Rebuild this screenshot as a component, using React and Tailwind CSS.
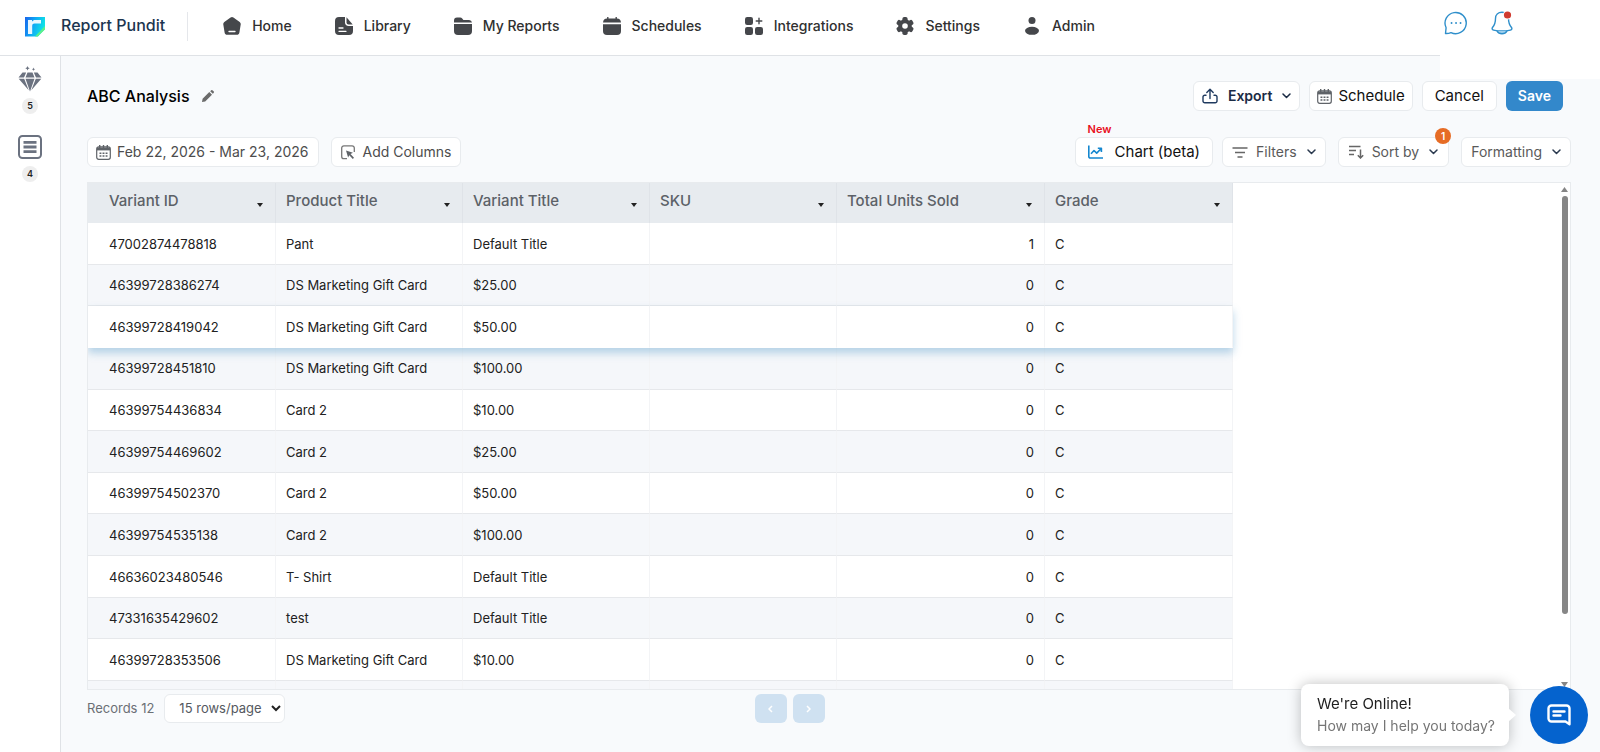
import { useState } from "react";
import clsx from "clsx";

const navItems = [
  { label: "Home", icon: HomeIcon },
  { label: "Library", icon: LibraryIcon },
  { label: "My Reports", icon: FolderIcon },
  { label: "Schedules", icon: CalendarSolidIcon },
  { label: "Integrations", icon: GridPlusIcon },
  { label: "Settings", icon: GearIcon },
  { label: "Admin", icon: UserIcon },
];

const columns = [
  { key: "id", label: "Variant ID", width: "w-[188px]" },
  { key: "product", label: "Product Title", width: "w-[187px]" },
  { key: "variant", label: "Variant Title", width: "w-[187px]" },
  { key: "sku", label: "SKU", width: "w-[187px]" },
  { key: "units", label: "Total Units Sold", width: "w-[208px]" },
  { key: "grade", label: "Grade", width: "w-[188px]" },
];

const rows = [
  { id: "47002874478818", product: "Pant", variant: "Default Title", sku: "", units: 1, grade: "C" },
  { id: "46399728386274", product: "DS Marketing Gift Card", variant: "$25.00", sku: "", units: 0, grade: "C" },
  { id: "46399728419042", product: "DS Marketing Gift Card", variant: "$50.00", sku: "", units: 0, grade: "C" },
  { id: "46399728451810", product: "DS Marketing Gift Card", variant: "$100.00", sku: "", units: 0, grade: "C" },
  { id: "46399754436834", product: "Card 2", variant: "$10.00", sku: "", units: 0, grade: "C" },
  { id: "46399754469602", product: "Card 2", variant: "$25.00", sku: "", units: 0, grade: "C" },
  { id: "46399754502370", product: "Card 2", variant: "$50.00", sku: "", units: 0, grade: "C" },
  { id: "46399754535138", product: "Card 2", variant: "$100.00", sku: "", units: 0, grade: "C" },
  { id: "46636023480546", product: "T- Shirt", variant: "Default Title", sku: "", units: 0, grade: "C" },
  { id: "47331635429602", product: "test", variant: "Default Title", sku: "", units: 0, grade: "C" },
  { id: "46399728353506", product: "DS Marketing Gift Card", variant: "$10.00", sku: "", units: 0, grade: "C" },
];

function LogoIcon() {
  return (
    <svg width="20" height="20" viewBox="0 0 20 20" aria-hidden="true">
      <defs>
        <linearGradient id="logo-fill" x1="0" y1="0" x2="1" y2="0.3">
          <stop offset="0" stopColor="#1a63ea" />
          <stop offset="0.5" stopColor="#0fa8f5" />
          <stop offset="1" stopColor="#0fe3e6" />
        </linearGradient>
      </defs>
      <path d="M0 0h20v12l-7 7.500H0z" fill="url(#logo-fill)" />
      <path d="M20 9v3.500L12.500 19.500 10 19.500z" fill="#5df08a" />
      <path d="M3 3h4v1.500L9 3h7v3.500H9.500C8 6.500 7.200 7.300 7.200 9v8H3z" fill="#e9f7ff" />
    </svg>
  );
}

function HomeIcon() {
  return (
    <svg width="18" height="18" viewBox="0 0 18 18" fill="#45474b" aria-hidden="true">
      <path d="M7.600.600a2.400 2.400 0 0 1 2.800 0l6.300 4.300c.8.600 1.200 1.500 1 2.500l-1.300 8c-.2 1.500-1.300 2.400-2.700 2.400H4.300c-1.400 0-2.500-.9-2.700-2.400l-1.300-8c-.2-1 .2-1.900 1-2.500z" />
      <path d="M6 14.500h6" stroke="#fff" strokeWidth="1.300" strokeLinecap="round" />
    </svg>
  );
}

function LibraryIcon() {
  return (
    <svg width="18" height="18" viewBox="0 0 18 18" fill="#45474b" aria-hidden="true">
      <path d="M4 0h6v5.500C10 7.500 11.500 9 13.500 9H18v5a4 4 0 0 1-4 4H4a4 4 0 0 1-4-4V4a4 4 0 0 1 4-4z" />
      <path d="M11.500.300 17.700 7.500H13.500a2 2 0 0 1-2-2z" />
      <path d="M4 11h4M4 14.300h7" stroke="#fff" strokeWidth="1.300" strokeLinecap="round" />
    </svg>
  );
}

function FolderIcon() {
  return (
    <svg width="18" height="18" viewBox="0 0 18 18" fill="#45474b" aria-hidden="true">
      <path d="M0 5.500V3.500A3 3 0 0 1 3 .500h3.200c.8 0 1.500.3 2 1L9.400 3H15a3 3 0 0 1 3 2.500z" />
      <path d="M0 7h18v7a4 4 0 0 1-4 4H4a4 4 0 0 1-4-4z" />
    </svg>
  );
}

function CalendarSolidIcon() {
  return (
    <svg width="18" height="18" viewBox="0 0 18 18" fill="#45474b" aria-hidden="true">
      <path d="M0 5.600C.200 3 1.600 1.500 4 1.500h10c2.400 0 3.800 1.500 4 4.100z" />
      <path d="M0 7.200h18V14a4 4 0 0 1-4 4H4a4 4 0 0 1-4-4z" />
      <path d="M4.800.500v2M13.200.500v2" stroke="#45474b" strokeWidth="1.400" strokeLinecap="round" />
    </svg>
  );
}

function GridPlusIcon() {
  return (
    <svg width="18" height="18" viewBox="0 0 18 18" fill="#45474b" aria-hidden="true">
      <rect width="8" height="8" rx="2.200" />
      <rect y="10" width="8" height="8" rx="2.200" />
      <rect x="10" y="10" width="8" height="8" rx="2.200" />
      <path d="M14 1.200v5.600M11.200 4h5.600" stroke="#45474b" strokeWidth="1.400" strokeLinecap="round" />
    </svg>
  );
}

function GearIcon() {
  return (
    <svg width="18" height="18" viewBox="0 0 18 18" aria-hidden="true">
      <g fill="#45474b">
        <circle cx="9" cy="9" r="6.800" />
        <rect x="6.400" y="0" width="5.200" height="18" rx="1.800" />
        <rect x="6.400" y="0" width="5.200" height="18" rx="1.800" transform="rotate(60 9 9)" />
        <rect x="6.400" y="0" width="5.200" height="18" rx="1.800" transform="rotate(120 9 9)" />
      </g>
      <circle cx="9" cy="9" r="2.800" fill="#fff" />
    </svg>
  );
}

function UserIcon() {
  return (
    <svg width="18" height="18" viewBox="0 0 18 18" fill="#45474b" aria-hidden="true">
      <circle cx="9" cy="3.600" r="3.500" />
      <ellipse cx="9" cy="13.800" rx="7" ry="4" />
    </svg>
  );
}

function DiamondIcon() {
  return (
    <svg width="24" height="26" viewBox="0 0 24 26" fill="#6b7280" aria-hidden="true">
      <path d="M4.500 6.500h3.700L6 11.500H.500zM9.500 6.500h5l2 5h-9zM15.800 6.500h3.700l4 5H18zM.700 12.700h5.500l4.500 11.500zM7.500 12.700h9L12 25.500zM17.800 12.700h5.500l-10 11.500z" />
      <path d="m9.500 0 .7 1.500 1.500.7-1.500.7-.7 1.500-.7-1.500-1.500-.7 1.500-.7zM15.500 1.500l.5 1.200 1.200.5-1.200.5-.5 1.200-.5-1.200-1.200-.5 1.200-.5z" />
    </svg>
  );
}

function ListBoxIcon() {
  return (
    <svg width="24" height="24" viewBox="0 0 24 24" fill="none" stroke="#6b7280" strokeWidth="2" aria-hidden="true">
      <rect x="1" y="1" width="22" height="22" rx="3.500" />
      <path d="M5.500 7.300h13M5.500 12h13M5.500 16.700h13" strokeWidth="2.800" />
    </svg>
  );
}

function PencilIcon() {
  return (
    <svg width="12" height="12" viewBox="0 0 12 12" fill="#6b6b6b" aria-hidden="true">
      <path d="M0 12l.6-3.200L7.300 2l2.700 2.700-6.800 6.700zM8.200 1.200l.8-.8a1.200 1.200 0 0 1 1.700 0l.9.900a1.200 1.200 0 0 1 0 1.700l-.8.8z" />
    </svg>
  );
}

function CalendarIcon() {
  return (
    <svg width="15" height="15" viewBox="0 0 15 15" fill="none" stroke="#5f6368" aria-hidden="true">
      <rect x=".7" y="1.900" width="13.600" height="12.400" rx="2" strokeWidth="1.200" />
      <path d="M1 3.900h13" strokeWidth="3" />
      <path d="M3.700 0v3M7.500 0v3M11.300 0v3" strokeWidth="1.400" />
      <path d="M3.500 8.300h8M3.500 11h8" strokeWidth="1.600" strokeDasharray="1.900 1.150" />
    </svg>
  );
}

function AddColumnsIcon() {
  return (
    <svg width="14" height="15" viewBox="0 0 14 15" aria-hidden="true">
      <path d="M13.300 7V3a2.200 2.200 0 0 0-2.200-2.200H2.900A2.200 2.200 0 0 0 .7 3v8.500a2.200 2.200 0 0 0 2.200 2.200H6" fill="none" stroke="#777" strokeWidth="1.300" />
      <path d="M5 5.500l7 2.300-2.500 1.300 3.500 3.600-1.200 1.200-3.500-3.600-1.200 2.300z" fill="#5f6368" />
    </svg>
  );
}

function ExportIcon() {
  return (
    <svg width="16" height="16" viewBox="0 0 16 16" fill="none" stroke="#1f3a5f" strokeWidth="1.400" strokeLinecap="round" strokeLinejoin="round" aria-hidden="true">
      <path d="M8 10.500V1.500M4.800 4.500 8 1.300l3.200 3.200M4 7.300H2.800A1.800 1.800 0 0 0 1 9.100v3.800a1.800 1.800 0 0 0 1.800 1.800h10.400a1.800 1.800 0 0 0 1.800-1.800V9.100a1.800 1.800 0 0 0-1.800-1.800H12" />
    </svg>
  );
}

function ChartIcon() {
  return (
    <svg width="15" height="14" viewBox="0 0 15 14" fill="none" stroke="#1587cf" strokeWidth="1.600" strokeLinejoin="round" aria-hidden="true">
      <path d="M.8.500v11a1.500 1.500 0 0 0 1.500 1.500H15" />
      <path d="M3 8.800l3-3.300 2.700 2.600 4.300-4.300M9.800 3.300h3.600v3.600" />
    </svg>
  );
}

function FilterIcon() {
  return (
    <svg width="16" height="11" viewBox="0 0 16 11" stroke="#666" strokeWidth="1.400" aria-hidden="true">
      <path d="M.500 1h15M3 5.500h10M5.500 10h5" />
    </svg>
  );
}

function SortIcon() {
  return (
    <svg width="15" height="14" viewBox="0 0 15 14" fill="none" stroke="#666" strokeWidth="1.500" aria-hidden="true">
      <path d="M0 1.500h11.500M0 5.500h7M0 9.500h5M11.500 4.500v8.500M8.800 10.300l2.700 2.700 2.700-2.700" />
    </svg>
  );
}

function ChevronDown({ className }) {
  return (
    <svg width="9" height="6" viewBox="0 0 9 6" fill="none" stroke="currentColor" strokeWidth="1.500" strokeLinecap="round" strokeLinejoin="round" className={className} aria-hidden="true">
      <path d="M1 1l3.500 3.500L8 1" />
    </svg>
  );
}

function ChatOutlineIcon() {
  return (
    <svg width="24" height="24" viewBox="0 0 24 24" fill="none" stroke="#2f8fcb" strokeWidth="1.400" strokeLinejoin="round" aria-hidden="true">
      <path d="M1.500 22.500l.6-5.800A10.600 10.600 0 1 1 7 21.600c-1.700.7-3.500 1-5.500.9z" />
      <path d="M7.500 12h.1M12 12h.1M16.500 12h.1" strokeWidth="1.800" strokeLinecap="round" />
    </svg>
  );
}

function BellIcon() {
  return (
    <svg width="22" height="24" viewBox="0 0 22 24" fill="none" stroke="#2f8fcb" strokeWidth="1.400" strokeLinejoin="round" aria-hidden="true">
      <path d="M11 1.200c-4 0-6.500 2.600-6.500 6.200 0 5-1 6.800-3 9.100-.8 1-.4 2.300 1 2.600 5.500 1.100 11.500 1.100 17 0 1.400-.3 1.800-1.600 1-2.600-2-2.300-3-4.100-3-9.100 0-3.600-2.500-6.200-6.500-6.200z" />
      <path d="M6 19.900c1 1.900 2.800 2.900 5 2.900s4-1 5-2.900" fill="#9ed0ee" />
      <circle cx="16.500" cy="4" r="4.600" fill="#fff" stroke="none" />
      <circle cx="16.500" cy="4" r="3.600" fill="#d03a2f" stroke="none" />
    </svg>
  );
}

function MessageIcon() {
  return (
    <svg width="24" height="22" viewBox="0 0 24 22" fill="none" stroke="#fff" strokeWidth="2.400" strokeLinejoin="round" strokeLinecap="round" aria-hidden="true">
      <path d="M4.500 1.500h15a3 3 0 0 1 3 3v15.700l-4-2.700h-14a3 3 0 0 1-3-3v-10a3 3 0 0 1 3-3z" />
      <path d="M6.500 7.500h11M6.500 11.500h7" />
    </svg>
  );
}

function ToolButton({ className, children, ...rest }) {
  return (
    <button
      type="button"
      className={clsx(
        "relative flex h-[30px] items-center rounded-md border border-[#e8ebee] bg-white whitespace-nowrap",
        className
      )}
      {...rest}
    >
      {children}
    </button>
  );
}

function Header() {
  return (
    <header className="flex h-14 shrink-0 items-start border-b border-[#dfe2e6] bg-white">
      <a href="#" className="mt-3 flex h-[29px] items-center gap-4 border-r border-gray-200 pr-[22px] pl-[25px]">
        <LogoIcon />
        <span className="pb-1 text-base font-medium text-[#1c3550]">Report Pundit</span>
      </a>
      <nav className="mt-3 ml-[35px] flex h-[27px] items-center gap-[43px]">
        {navItems.map(({ label, icon: Icon }) => (
          <a key={label} href="#" className="flex items-center gap-[11px] text-sm font-medium text-[#303030]">
            <Icon />
            {label}
          </a>
        ))}
      </nav>
      <div className="relative z-10 ml-auto flex h-[79px] w-40 shrink-0 items-start gap-[23px] bg-white pt-[11px] pl-1">
        <button type="button" aria-label="Messages">
          <ChatOutlineIcon />
        </button>
        <button type="button" aria-label="Notifications">
          <BellIcon />
        </button>
      </div>
    </header>
  );
}

function Sidebar() {
  return (
    <aside className="flex w-[61px] shrink-0 flex-col items-center border-r border-[#dfe2e6] bg-white pt-[10px]">
      <button type="button" aria-label="Plan">
        <DiamondIcon />
      </button>
      <span className="mt-1.5 flex size-4 items-center justify-center rounded-full bg-[#eeeeee] text-[9px] font-semibold text-[#222]">
        5
      </span>
      <button type="button" aria-label="Reports" className="mt-[21px]">
        <ListBoxIcon />
      </button>
      <span className="mt-[7px] flex size-4 items-center justify-center rounded-full bg-[#eeeeee] text-[9px] font-semibold text-[#222]">
        4
      </span>
    </aside>
  );
}

function TitleBar() {
  return (
    <div className="flex h-[30px] items-center justify-between pr-2">
      <div className="flex items-center gap-3">
        <h1 className="text-base font-medium text-black">ABC Analysis</h1>
        <button type="button" aria-label="Rename report">
          <PencilIcon />
        </button>
      </div>
      <div className="flex items-center gap-[9px]">
        <ToolButton className="px-2 text-sm font-semibold text-[#1b2b45]">
          <ExportIcon />
          <span className="ml-[10px]">Export</span>
          <ChevronDown className="ml-[10px]" />
        </ToolButton>
        <ToolButton className="gap-1.5 px-[7px] text-[15px] text-[#111]">
          <CalendarIcon />
          Schedule
        </ToolButton>
        <ToolButton className="px-3 text-[15px] text-[#111]">Cancel</ToolButton>
        <button type="button" className="h-[30px] rounded-md bg-[#3388cb] px-3 text-sm font-semibold text-white">
          Save
        </button>
      </div>
    </div>
  );
}

function Toolbar() {
  return (
    <div className="mt-[26px] flex h-[30px] items-center justify-between">
      <div className="flex gap-3">
        <ToolButton className="gap-1.5 px-2 pr-[10px] text-sm text-[#4d4d4d]">
          <CalendarIcon />
          Feb 22, 2026 - Mar 23, 2026
        </ToolButton>
        <ToolButton className="gap-[7px] px-[9px] text-sm text-[#4d4d4d]">
          <AddColumnsIcon />
          Add Columns
        </ToolButton>
      </div>
      <div className="flex">
        <ToolButton className="gap-3 px-3 text-[15px] text-[#111]">
          <span className="absolute -top-[15px] left-3 text-[11px] leading-3 font-semibold text-[#e8101c]">New</span>
          <ChartIcon />
          Chart (beta)
        </ToolButton>
        <ToolButton className="ml-[9px] px-[9px] text-sm text-[#5a5a5a]">
          <FilterIcon />
          <span className="ml-2">Filters</span>
          <ChevronDown className="ml-[10px] text-[#2b3a4f]" />
        </ToolButton>
        <ToolButton className="ml-3 px-[10px] text-sm text-[#5a5a5a]">
          <SortIcon />
          <span className="ml-2">Sort by</span>
          <ChevronDown className="ml-[10px] text-[#2b3a4f]" />
          <span className="absolute -top-[10px] -right-[3px] flex size-4 items-center justify-center rounded-full bg-[#e66c25] text-[10px] font-semibold text-white">
            1
          </span>
        </ToolButton>
        <ToolButton className="ml-3 px-[9px] text-sm text-[#5a5a5a]">
          Formatting
          <ChevronDown className="ml-[10px] text-[#2b3a4f]" />
        </ToolButton>
      </div>
    </div>
  );
}

function ReportTable() {
  return (
    <table className="h-[540px] w-[1145px] table-fixed border-separate border-spacing-0">
      <thead>
        <tr className="h-10 bg-[#e7ebef]">
          {columns.map((c, i) => (
            <th
              key={c.key}
              className={clsx(
                "h-10 border-r border-[#dfe3e8] pr-3 pb-[3px] text-left text-[15px] font-medium text-[#5c6167]",
                c.width,
                i === 0 ? "pl-[21px]" : "pl-[10px]"
              )}
            >
              <div className="flex items-center justify-between">
                {c.label}
                <svg width="6" height="4" viewBox="0 0 6 4" className="mt-1.5" aria-hidden="true">
                  <path d="M0 0h6L3 4z" fill="#222" />
                </svg>
              </div>
            </th>
          ))}
        </tr>
      </thead>
      <tbody>
        {rows.map((row, idx) => (
          <tr
            key={row.id}
            className={clsx(
              idx % 2 === 0 ? "bg-white" : "bg-[#f5f7fa]",
              idx === 2 && "relative z-10 shadow-[0_5px_8px_rgba(60,140,195,0.350)]"
            )}
          >
            {columns.map((c, i) => (
              <td
                key={c.key}
                className={clsx(
                  "border-r border-b border-r-gray-100 p-0 pt-0.5 text-[13px] text-[#212121]",
                  idx === 2 ? "border-b-white" : "border-b-[#e6e8eb]",
                  i === 0 ? "pl-[21px]" : "pl-[10px]",
                  c.key === "units" && "pr-[10px] text-right"
                )}
              >
                {row[c.key]}
              </td>
            ))}
          </tr>
        ))}
        <tr className="h-[42px] bg-[#f5f7fa]">
          {columns.map((c) => (
            <td key={c.key} className="h-[42px] border-r border-r-gray-100 p-0" />
          ))}
        </tr>
      </tbody>
    </table>
  );
}

function ScrollTrack() {
  return (
    <div className="flex w-[11px] shrink-0 flex-col items-center pt-1" aria-hidden="true">
      <svg width="7" height="5" viewBox="0 0 7 5" className="shrink-0">
        <path d="M3.500 0 7 5H0z" fill="#858585" />
      </svg>
      <div className="mt-1 min-h-0 w-[6px] flex-1">
        <div className="h-[86%] rounded-full bg-[#868686]" />
      </div>
      <svg width="7" height="5" viewBox="0 0 7 5" className="mb-0.5 shrink-0">
        <path d="M3.500 5 7 0H0z" fill="#858585" />
      </svg>
    </div>
  );
}

function TableFooter({ pageSize, onPageSize }) {
  return (
    <div className="mt-1 flex h-[30px] items-start text-[13px] text-[#6b6f75]">
      <div className="flex w-[45%] items-center gap-[10px]">
        <span>Records 12</span>
        <div className="relative">
          <select
            aria-label="Rows per page"
            value={pageSize}
            onChange={(e) => onPageSize(Number(e.target.value))}
            className="block h-[29px] w-[121px] appearance-none rounded-md border border-[#e8ebee] bg-white pl-[14px] text-[13px] text-[#55595f]"
          >
            <option value={15}>15 rows/page</option>
            <option value={25}>25 rows/page</option>
            <option value={50}>50 rows/page</option>
          </select>
          <svg width="10" height="7" viewBox="0 0 10 7" fill="none" stroke="#222" strokeWidth="2" className="pointer-events-none absolute top-[11px] right-1" aria-hidden="true">
            <path d="M1 1l4 4 4-4" />
          </svg>
        </div>
      </div>
      <div className="flex gap-1.5">
        <button type="button" disabled aria-label="Previous page" className="flex h-[29px] w-8 items-center justify-center rounded-md bg-[#cfe1f1] text-white">
          <svg width="5" height="8" viewBox="0 0 5 8" fill="none" stroke="currentColor" strokeWidth="1.500" aria-hidden="true">
            <path d="M4 1 1 4l3 3" />
          </svg>
        </button>
        <button type="button" disabled aria-label="Next page" className="flex h-[29px] w-8 items-center justify-center rounded-md bg-[#cfe1f1] text-white">
          <svg width="5" height="8" viewBox="0 0 5 8" fill="none" stroke="currentColor" strokeWidth="1.500" aria-hidden="true">
            <path d="M1 1l3 3-3 3" />
          </svg>
        </button>
      </div>
    </div>
  );
}

function ChatWidget() {
  return (
    <div className="fixed right-3 bottom-1.5 z-20 flex items-center gap-[21px]">
      <div className="relative h-[62px] w-[208px] rounded-lg bg-white pt-2 pl-4 shadow-[0_0_14px_rgba(0,0,0,0.250)]">
        <p className="text-[15px] leading-6 text-[#1f1f1f]">We're Online!</p>
        <p className="text-sm leading-5 text-[#757575]">How may I help you today?</p>
        <svg width="8" height="14" viewBox="0 0 8 14" className="absolute top-6 -right-[7px]" aria-hidden="true">
          <path d="M0 0l8 7-8 7z" fill="#fff" />
        </svg>
      </div>
      <button type="button" aria-label="Open chat" className="flex size-[58px] items-center justify-center rounded-full bg-[#0563ce]">
        <MessageIcon />
      </button>
    </div>
  );
}

export default function App() {
  const [pageSize, setPageSize] = useState(15);

  return (
    <div className="flex h-screen flex-col overflow-hidden bg-[#f8fafc] font-['Inter',sans-serif]">
      <Header />
      <div className="flex min-h-0 flex-1">
        <Sidebar />
        <main className="flex min-w-0 flex-1 flex-col pt-[25px] pr-[29px] pb-7 pl-[26px]">
          <TitleBar />
          <Toolbar />
          <div className="mt-[15px] flex min-h-0 flex-1 overflow-hidden border border-[#e8ebee] bg-white">
            <div className="min-w-0 flex-1 overflow-hidden">
              <ReportTable />
            </div>
            <ScrollTrack />
          </div>
          <TableFooter pageSize={pageSize} onPageSize={setPageSize} />
        </main>
      </div>
      <ChatWidget />
    </div>
  );
}
